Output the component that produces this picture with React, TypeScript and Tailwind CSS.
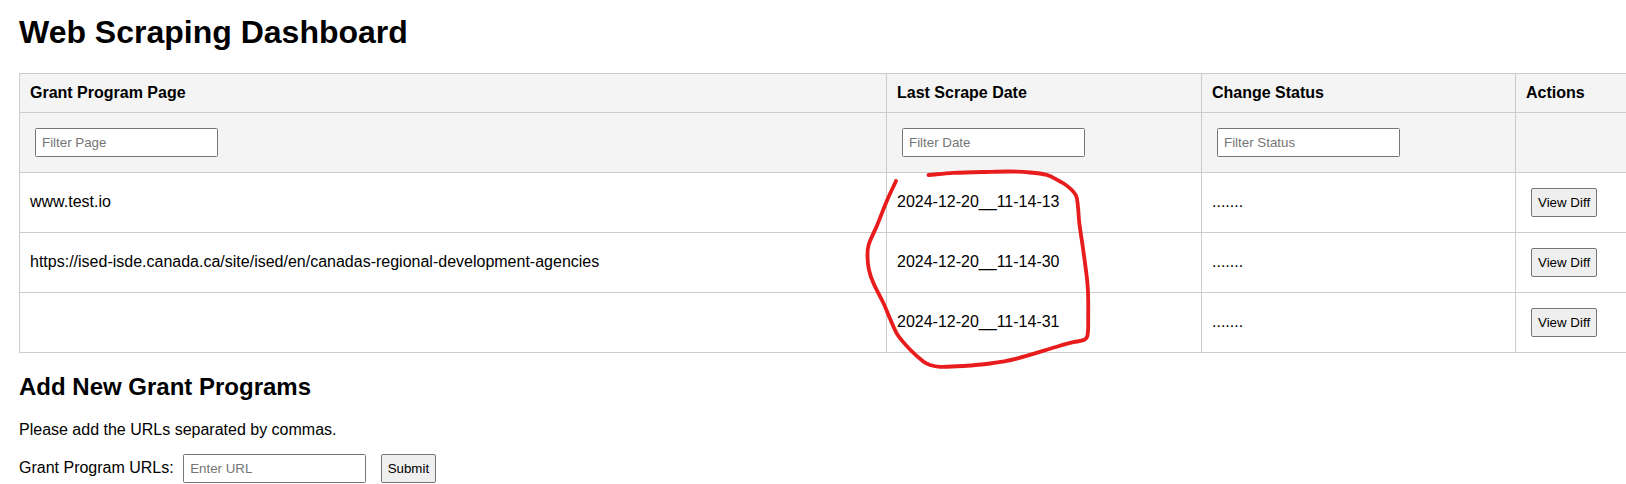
import React from "react";

type Row = { page: string; date: string; status: string };

const rows: Row[] = [
  { page: "www.test.io", date: "2024-12-20__11-14-13", status: "......." },
  {
    page: "https://ised-isde.canada.ca/site/ised/en/canadas-regional-development-agencies",
    date: "2024-12-20__11-14-30",
    status: ".......",
  },
  { page: "", date: "2024-12-20__11-14-31", status: "......." },
];

const cell = "border border-[#cccccc] p-[10px] text-left";
const textCell = "border border-[#cccccc] px-[10px] pt-[9px] pb-[11px] text-left";

const strokePoints: [number, number][] = [
  [928.5, 175], [953, 172.9], [983, 172], [1010, 171.5], [1030, 172.5], [1046.7, 174.9],
  [1056.7, 179.6], [1068, 186.6], [1076, 195.5], [1078, 207], [1079.2, 222], [1082.8, 247],
  [1086.8, 277], [1088, 292], [1088.2, 317], [1087.6, 335], [1084.3, 339.8], [1073.3, 342.2],
  [1056.7, 346.8], [1016.7, 358.6], [990, 363.5], [963.3, 366], [940, 366.8], [930, 365],
  [923.3, 361.5], [910, 349.5], [897.7, 335], [890.3, 319.3], [883.5, 303.3], [873.5, 283.3],
  [869, 270], [867.5, 256.7], [868.6, 245], [877, 225.5], [887, 200.5], [896, 181],
];

/** Builds a smooth Catmull-Rom curve through the given points. */
function smoothPath(p: [number, number][]): string {
  let d = `M${p[0][0]} ${p[0][1]}`;
  for (let i = 0; i < p.length - 1; i++) {
    const a = p[Math.max(i - 1, 0)];
    const b = p[i];
    const c = p[i + 1];
    const e = p[Math.min(i + 2, p.length - 1)];
    const k = Math.hypot(c[0] - b[0], c[1] - b[1]) / 3;
    const t1 = Math.hypot(c[0] - a[0], c[1] - a[1]) || 1;
    const t2 = Math.hypot(e[0] - b[0], e[1] - b[1]) || 1;
    const x1 = b[0] + ((c[0] - a[0]) / t1) * k;
    const y1 = b[1] + ((c[1] - a[1]) / t1) * k;
    const x2 = c[0] - ((e[0] - b[0]) / t2) * k;
    const y2 = c[1] - ((e[1] - b[1]) / t2) * k;
    d += `C${x1.toFixed(1)} ${y1.toFixed(1)} ${x2.toFixed(1)} ${y2.toFixed(1)} ${c[0]} ${c[1]}`;
  }
  return d;
}

function TextField({ placeholder, id }: { placeholder: string; id?: string }) {
  return (
    <input
      id={id}
      type="text"
      placeholder={placeholder}
      className="m-[5px] h-[29px] w-[183px] rounded-[1.5px] border border-[#767676] bg-white px-[6px] text-[13.333px] font-normal leading-[15px] placeholder:text-[#757575]"
    />
  );
}

function Button({ children }: { children: React.ReactNode }) {
  return (
    <button className="m-[5px] h-[29px] rounded-[2px] border border-[#767676] bg-[#efefef] px-[6px] text-[13.333px] leading-[15px] text-black">
      {children}
    </button>
  );
}

export default function App() {
  return (
    <div className="relative h-[484px] overflow-hidden bg-white pl-[19px] pt-[14px] font-['Liberation_Sans',Arial,sans-serif] text-base leading-[18px] text-black">
      <h1 className="mb-[22px] text-[32px] font-bold leading-[37px]">Web Scraping Dashboard</h1>
      <table className="w-[1621px] table-fixed border-collapse">
        <colgroup>
          <col className="w-[867px]" />
          <col className="w-[315px]" />
          <col className="w-[314px]" />
          <col className="w-[125px]" />
        </colgroup>
        <thead className="bg-[#f4f4f4]">
          <tr className="h-[39px]">
            <th className={cell}>Grant Program Page</th>
            <th className={cell}>Last Scrape Date</th>
            <th className={cell}>Change Status</th>
            <th className={cell}>Actions</th>
          </tr>
          <tr className="h-[60px]">
            <th className={cell}><TextField placeholder="Filter Page" /></th>
            <th className={cell}><TextField placeholder="Filter Date" /></th>
            <th className={cell}><TextField placeholder="Filter Status" /></th>
            <th className={cell}></th>
          </tr>
        </thead>
        <tbody>
          {rows.map((r) => (
            <tr key={r.date} className="h-[60px]">
              <td className={textCell}>{r.page}</td>
              <td className={textCell}>{r.date}</td>
              <td className={textCell}>{r.status}</td>
              <td className={cell}><Button>View Diff</Button></td>
            </tr>
          ))}
        </tbody>
      </table>
      <h2 className="mt-5 text-2xl font-bold leading-[27px]">Add New Grant Programs</h2>
      <p className="mt-[21px]">Please add the URLs separated by commas.</p>
      <form className="mt-[10px]" onSubmit={(e) => e.preventDefault()}>
        <label htmlFor="urls">Grant Program URLs:</label> <TextField id="urls" placeholder="Enter URL" />{" "}
        <Button>Submit</Button>
      </form>
      <svg className="pointer-events-none absolute left-0 top-0" width="1626" height="484" fill="none">
        <path d={smoothPath(strokePoints)} stroke="#e81c1c" strokeWidth="3.8" strokeLinecap="round" strokeLinejoin="round" />
      </svg>
    </div>
  );
}
